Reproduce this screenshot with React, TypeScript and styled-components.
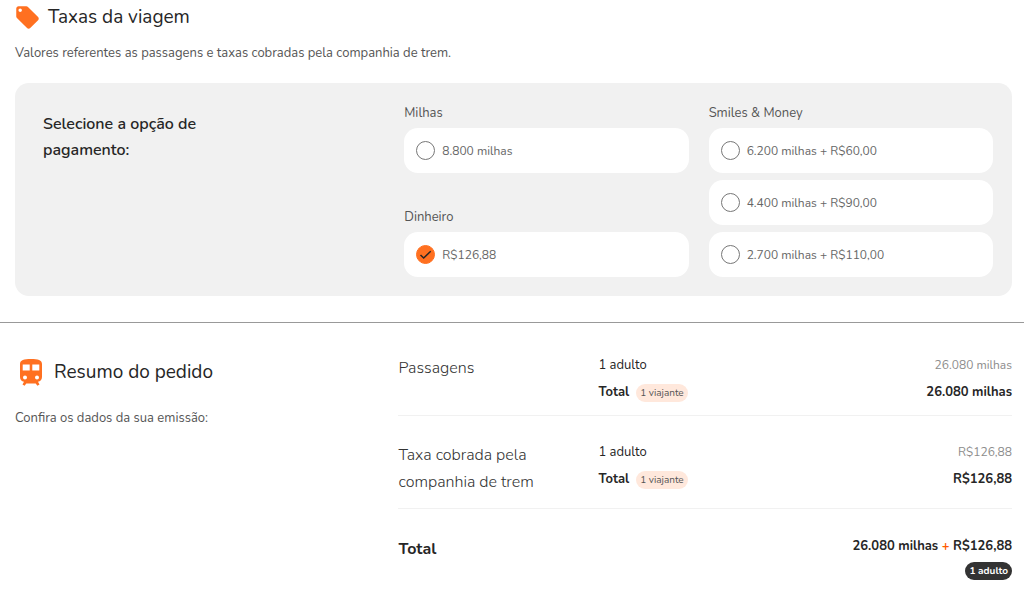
import React, { useState } from 'react';
import styled, { createGlobalStyle } from 'styled-components';

const GlobalStyle = createGlobalStyle`
  *, *::before, *::after { box-sizing: border-box; }
  body {
    margin: 0;
    background: #fff;
    color: #262626;
    font-family: Nunito, Lato, "Open Sans", sans-serif;
    font-size: 13px;
    line-height: 20px;
  }
  h1, h2, h3, p, dl, dt, dd { margin: 0; }
`;

const Section = styled.section`
  padding: 0 12px 0 15px;
`;

const Heading = styled.h2<{ $gap: number; $inset?: number }>`
  display: flex;
  align-items: center;
  gap: ${(p) => p.$gap}px;
  padding-left: ${(p) => p.$inset ?? 0}px;
  font-size: 19px;
  line-height: 32px;
  font-weight: 400;
`;

const Icon = styled.svg`
  flex: none;
  fill: #ff7020;
`;

const Lead = styled.p`
  color: #555;
`;

const Fees = styled(Section)`
  padding-top: 1px;
  ${Lead} { padding-top: 10px; }
`;

const Panel = styled.div`
  display: grid;
  grid-template-columns: 6fr 5fr 5fr;
  column-gap: 20px;
  margin-top: 20px;
  padding: 20px 19px 19px 28px;
  border-radius: 14px;
  background: #f1f1f1;
`;

const PanelTitle = styled.h3`
  max-width: 200px;
  padding-top: 8px;
  font-size: 16px;
  line-height: 26px;
  font-weight: 600;
`;

const Column = styled.div`
  display: flex;
  flex-direction: column;
  justify-content: space-between;
`;

const Group = styled.fieldset`
  display: flex;
  flex-direction: column;
  gap: 7px;
  min-width: 0;
  margin: 0;
  padding: 0;
  border: 0;
`;

const Legend = styled.legend`
  padding: 0 0 5px;
  color: #555;
`;

const Option = styled.label`
  display: flex;
  align-items: center;
  gap: 7px;
  height: 45px;
  padding: 0 12px;
  border-radius: 14px;
  background: #fff;
  color: #666;
  font-size: 12px;
  cursor: pointer;
`;

const RadioBox = styled.span`
  display: grid;
  position: relative;
`;

const Radio = styled.input`
  appearance: none;
  width: 19px;
  height: 19px;
  margin: 0;
  border: 1px solid #777;
  border-radius: 50%;
  &:checked { border-color: #ff7020; background: #ff7020; }
`;

const Tick = styled.svg`
  position: absolute;
  inset: 0;
  pointer-events: none;
`;

const Divider = styled.hr`
  margin: 26px 0 0;
  border: 0;
  border-top: 1px solid #999;
`;

const Summary = styled(Section)`
  display: grid;
  grid-template-columns: 5fr 8fr;
  padding-top: 29px;
  ${Lead} { padding-top: 20px; }
`;

const Intro = styled.div`
  padding-top: 4px;
`;

const Row = styled.div`
  display: grid;
  grid-template-columns: 200px 1fr;
  padding-bottom: 9px;
  border-bottom: 1px solid #f1f1f1;
  & + & { padding-top: 23px; }
`;

const RowTitle = styled.h3<{ $strong?: boolean }>`
  padding: 3px 40px 3px 0;
  color: ${(p) => (p.$strong ? 'inherit' : '#333')};
  font-size: 16px;
  line-height: 27px;
  font-weight: ${(p) => (p.$strong ? 700 : 300)};
`;

const Line = styled.div<{ $strong?: boolean }>`
  display: flex;
  align-items: center;
  justify-content: space-between;
  line-height: 27px;
  font-weight: ${(p) => (p.$strong ? 700 : 400)};
`;

const Term = styled.dt`
  display: flex;
  align-items: center;
  gap: 7px;
`;

const Amount = styled.dd<{ $muted?: boolean }>`
  color: ${(p) => (p.$muted ? '#8c8c8c' : 'inherit')};
  font-size: ${(p) => (p.$muted ? 12 : 13)}px;
`;

const Badge = styled.span<{ $dark?: boolean }>`
  padding: 0 4px;
  border-radius: 9px;
  background: ${(p) => (p.$dark ? '#333' : '#ffe8dc')};
  color: ${(p) => (p.$dark ? '#fff' : '#555')};
  font-size: 10px;
  line-height: 18px;
  font-weight: ${(p) => (p.$dark ? 700 : 400)};
`;

const GrandTotal = styled.div`
  display: flex;
  justify-content: space-between;
  padding-top: 24px;
`;

const GrandAmount = styled.div`
  display: flex;
  flex-direction: column;
  align-items: flex-end;
  gap: 2px;
  line-height: 27px;
  font-weight: 700;
`;

const Plus = styled.span`
  color: #ff5a00;
`;

function TagIcon() {
  return (
    <Icon width="25" height="27" viewBox="1 0 22 24" aria-hidden="true">
      <path d="M21.41 11.58l-9-9C12.05 2.22 11.55 2 11 2H4c-1.1 0-2 .9-2 2v7c0 .55.22 1.05.59 1.42l9 9c.36.36.86.58 1.41.58s1.05-.22 1.41-.59l7-7c.37-.36.59-.86.59-1.41s-.23-1.06-.59-1.42zM5.5 7C4.67 7 4 6.33 4 5.5S4.67 4 5.5 4 7 4.67 7 5.5 6.33 7 5.5 7z" />
    </Icon>
  );
}

function TrainIcon() {
  return (
    <Icon width="22" height="27" viewBox="0 0 22 27" aria-hidden="true">
      <path
        fillRule="evenodd"
        d="M11 0C4 0 0 1 0 5v13c0 2.600 1.600 4.300 4 4.800L2.500 25.500 4.600 26.800 6.300 24.500h9.400l1.700 2.300 2.100-1.300L18 22.800C20.400 22.300 22 20.600 22 18V5c0-4-4-5-11-5zM2.700 5.500h7v6h-7zM12.300 5.500h7v6h-7zM5 16.500a2 2 0 1 1 0 4 2 2 0 0 1 0-4zM17 16.500a2 2 0 1 1 0 4 2 2 0 0 1 0-4z"
      />
    </Icon>
  );
}

type ChoiceProps = { label: string; value: string; onPick: (v: string) => void };

function Choice({ label, value, onPick }: ChoiceProps) {
  const checked = label === value;
  return (
    <Option>
      <RadioBox>
        <Radio type="radio" name="payment" checked={checked} onChange={() => onPick(label)} />
        {checked && (
          <Tick width="19" height="19" viewBox="0 0 19 19" fill="none" stroke="#262626" strokeWidth="1.500">
            <path d="M4.500 10l3.200 3 7-6.800" />
          </Tick>
        )}
      </RadioBox>
      {label}
    </Option>
  );
}

function SummaryRow({ title, amount }: { title: string; amount: string }) {
  return (
    <Row>
      <RowTitle>{title}</RowTitle>
      <dl>
        <Line>
          <Term>1 adulto</Term>
          <Amount $muted>{amount}</Amount>
        </Line>
        <Line $strong>
          <Term>
            Total <Badge>1 viajante</Badge>
          </Term>
          <Amount>{amount}</Amount>
        </Line>
      </dl>
    </Row>
  );
}

const mixed = ['6.200 milhas + R$60,00', '4.400 milhas + R$90,00', '2.700 milhas + R$110,00'];

export default function App() {
  const [value, setValue] = useState('R$126,88');
  return (
    <main>
      <GlobalStyle />
      <Fees>
        <Heading $gap={8}>
          <TagIcon />
          Taxas da viagem
        </Heading>
        <Lead>Valores referentes as passagens e taxas cobradas pela companhia de trem.</Lead>
        <Panel>
          <PanelTitle>Selecione a opção de pagamento:</PanelTitle>
          <Column>
            <Group>
              <Legend>Milhas</Legend>
              <Choice label="8.800 milhas" value={value} onPick={setValue} />
            </Group>
            <Group>
              <Legend>Dinheiro</Legend>
              <Choice label="R$126,88" value={value} onPick={setValue} />
            </Group>
          </Column>
          <Group>
            <Legend>Smiles &amp; Money</Legend>
            {mixed.map((label) => (
              <Choice key={label} label={label} value={value} onPick={setValue} />
            ))}
          </Group>
        </Panel>
      </Fees>
      <Divider />
      <Summary>
        <Intro>
          <Heading $gap={12} $inset={5}>
            <TrainIcon />
            Resumo do pedido
          </Heading>
          <Lead>Confira os dados da sua emissão:</Lead>
        </Intro>
        <div>
          <SummaryRow title="Passagens" amount="26.080 milhas" />
          <SummaryRow title="Taxa cobrada pela companhia de trem" amount="R$126,88" />
          <GrandTotal>
            <RowTitle $strong>Total</RowTitle>
            <GrandAmount>
              <span>
                26.080 milhas <Plus>+</Plus> R$126,88
              </span>
              <Badge $dark>1 adulto</Badge>
            </GrandAmount>
          </GrandTotal>
        </div>
      </Summary>
    </main>
  );
}
